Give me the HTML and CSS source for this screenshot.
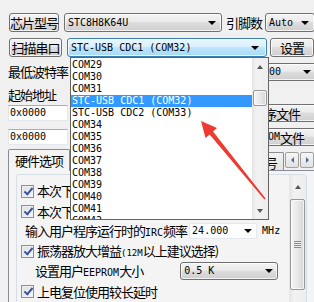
FILE: index.html
```html
<!DOCTYPE html>
<html lang="zh-CN">
<head>
    <meta charset="UTF-8">
    <title>STC-ISP</title>
    <link rel="stylesheet" href="styles.css">
</head>
<body>

<div class="window">
    <!-- Baris cip -->
    <div class="row row-chip">
        <button class="btn btn-side">芯片型号</button>
        <div class="combo combo-chip"><span class="combo-text">STC8H8K64U</span><span class="combo-arrow"></span></div>
        <span class="label label-pins">引脚数</span>
        <div class="combo combo-pins"><span class="combo-text">Auto</span><span class="combo-arrow"></span></div>
    </div>

    <div class="row row-port">
        <button class="btn btn-side">扫描串口</button>
        <div class="combo combo-port"><span class="combo-text">STC-USB CDC1 (COM32)</span><span class="combo-arrow"></span></div>
        <button class="btn btn-set">设置</button>
    </div>

    <div class="row row-baud">
        <span class="label">最低波特率</span>
        <div class="combo combo-baud"><span class="combo-text">115200</span><span class="combo-arrow"></span></div>
    </div>

    <div class="row row-addr-title">
        <span class="label">起始地址</span>
    </div>

    <div class="row row-addr">
        <div class="field">0x0000</div>
        <button class="btn btn-file">打开程序文件</button>
    </div>

    <div class="row row-addr">
        <div class="field">0x0000</div>
        <button class="btn btn-file btn-file-eeprom">打开<span class="en">EEPROM</span>文件</button>
    </div>

    <!-- Tab pilihan perkakasan -->
    <div class="tabs">
        <div class="tab-strip">
            <div class="tab is-active">硬件选项</div>
            <div class="tab-rest">
                <div class="tab">程序加密后传输</div>
                <div class="tab">ID号</div>
            </div>
            <div class="tab-scroll">
                <span class="tab-scroll-btn"><span class="tri tri-left"></span></span>
                <span class="tab-scroll-btn"><span class="tri tri-right"></span></span>
            </div>
        </div>

        <div class="tab-panel">
            <div class="options">
                <div class="options-list">
                    <div class="opt-row">
                        <span class="check"></span>
                        <span>本次下载时调节<span class="en">IRC</span>频率</span>
                    </div>
                    <div class="opt-row">
                        <span class="check"></span>
                        <span>本次下载后自动运行</span>
                    </div>
                    <div class="opt-row opt-plain">
                        <span>输入用户程序运行时的<span class="en">IRC</span>频率</span>
                        <div class="edit-combo"><span class="combo-text">24.000</span><span class="combo-arrow"></span></div>
                        <span class="en unit">MHz</span>
                    </div>
                    <div class="opt-row">
                        <span class="check"></span>
                        <span>振荡器放大增益<span class="small">(12M</span>以上建议选择)</span>
                    </div>
                    <div class="opt-row opt-indent">
                        <span>设置用户<span class="en">EEPROM</span>大小</span>
                        <div class="combo combo-eeprom"><span class="combo-text">0.5 K</span><span class="combo-arrow"></span></div>
                    </div>
                    <div class="opt-row">
                        <span class="check"></span>
                        <span>上电复位使用较长延时</span>
                    </div>
                </div>
                <div class="vscroll vscroll-options">
                    <span class="scroll-btn"><span class="tri tri-up"></span></span>
                    <span class="scroll-track">
                        <span class="scroll-thumb scroll-thumb-long"><span class="grip"></span></span>
                    </span>
                </div>
            </div>
        </div>
    </div>

    <!-- Senarai port yang terbuka -->
    <div class="dropdown">
        <ul class="dropdown-items">
            <li>COM29</li>
            <li>COM30</li>
            <li>COM31</li>
            <li class="is-selected">STC-USB CDC1 (COM32)</li>
            <li>STC-USB CDC2 (COM33)</li>
            <li>COM34</li>
            <li>COM35</li>
            <li>COM36</li>
            <li>COM37</li>
            <li>COM38</li>
            <li>COM39</li>
            <li>COM40</li>
            <li>COM41</li>
            <li>COM42</li>
        </ul>
        <div class="vscroll vscroll-list">
            <span class="scroll-btn"><span class="tri tri-up"></span></span>
            <span class="scroll-track">
                <span class="scroll-thumb scroll-thumb-short"></span>
            </span>
            <span class="scroll-btn"><span class="tri tri-down"></span></span>
        </div>
    </div>

    <svg class="pointer" width="314" height="302" viewBox="0 0 314 302">
        <polygon points="201,121 217,128 213,131.5 265.6,198.6 264.4,199.6 209.6,134.4 205.5,138" fill="#ee3a31"/>
    </svg>
</div>

</body>
</html>
```

FILE: styles.css
```css
* {
    box-sizing: border-box;
}

body {
    margin: 0;
    background-color: #f0f0f0;
    font-family: "Noto Sans CJK SC", sans-serif;
    font-size: 13px;
    letter-spacing: -1px;
    line-height: 1;
    color: #000;
}

.window {
    position: relative;
    width: 314px;
    height: 302px;
    overflow: hidden;
    padding-left: 8px;
}

.row {
    display: flex;
    align-items: center;
    white-space: nowrap;
}

.en {
    font-family: "DejaVu Sans Mono", monospace;
    font-size: 10px;
    letter-spacing: 0;
}

.small {
    font-family: "DejaVu Sans Mono", monospace;
    font-size: 9px;
    letter-spacing: 0;
}

/* butang gaya Windows 7 */
.btn {
    display: flex;
    align-items: center;
    justify-content: center;
    height: 19px;
    padding: 0;
    border: 1px solid #707070;
    border-radius: 3px;
    background: linear-gradient(#f3f3f3, #ebebeb 45%, #dddddd 50%, #cfcfcf);
    box-shadow: inset 0 0 0 1px rgba(255, 255, 255, 0.75);
    font: inherit;
    letter-spacing: inherit;
    color: #000;
    white-space: nowrap;
}

.btn-side {
    width: 56px;
    margin-left: 1px;
}

.btn-set {
    width: 44px;
    margin-left: 3px;
    flex-shrink: 0;
}

.btn-file {
    width: 104px;
    height: 18px;
    margin-left: 145px;
    justify-content: flex-end;
    padding-right: 16px;
    flex-shrink: 0;
}

.btn-file-eeprom {
    padding-right: 12px;
}

.combo {
    display: flex;
    align-items: center;
    height: 19px;
    padding: 0 5px 0 3px;
    border: 1px solid #707070;
    border-radius: 3px;
    background: linear-gradient(#f3f3f3, #ebebeb 45%, #dddddd 50%, #cfcfcf);
    box-shadow: inset 0 0 0 1px rgba(255, 255, 255, 0.75);
    flex-shrink: 0;
}

.combo-text {
    flex: 1;
    font-family: "DejaVu Sans Mono", monospace;
    font-size: 10px;
    letter-spacing: 0;
}

.combo-arrow {
    width: 0;
    height: 0;
    border-left: 4px solid transparent;
    border-right: 4px solid transparent;
    border-top: 4px solid #000;
}

.label {
    display: block;
}

.row-chip {
    margin-top: 13px;
}

.combo-chip {
    width: 158px;
    margin-left: 5px;
}

.label-pins {
    margin-left: 4px;
}

.combo-pins {
    width: 50px;
    margin-left: 3px;
}

.row-port {
    margin-top: 6px;
}

.combo-port {
    width: 200px;
    margin-left: 5px;
    border-color: #3c7fb1;
    background: linear-gradient(#eaf6fd, #d9f0fc 45%, #bee6fd 50%, #a7d9f5);
}

.combo-port .combo-arrow {
    margin-right: 2px;
}

.row-baud {
    margin-top: 5px;
    height: 19px;
}

.combo-baud {
    width: 76px;
    height: 18px;
    margin-left: 173px;
}

.row-addr-title {
    margin-top: 5px;
    height: 16px;
}

.row-addr {
    height: 18px;
    margin-top: 2px;
}

.row-addr + .row-addr {
    margin-top: 6px;
}

.field {
    width: 60px;
    height: 16px;
    padding: 2px 0 0 1px;
    border: 1px solid #abadb3;
    border-color: #abadb3 #e3e9ef #e3e9ef #e2e3ea;
    background-color: #fff;
    font-family: "DejaVu Sans Mono", monospace;
    font-size: 10px;
    letter-spacing: 0;
    flex-shrink: 0;
}

/* tab */
.tabs {
    margin-top: 3px;
}

.tab-strip {
    display: flex;
    align-items: flex-end;
    height: 21px;
    white-space: nowrap;
}

.tab {
    height: 18px;
    padding: 3px 6px 0;
    border: 1px solid #898c95;
    border-bottom: none;
    border-radius: 2px 2px 0 0;
    background: linear-gradient(#f2f2f2, #e3e3e3);
    flex-shrink: 0;
}

.tab.is-active {
    position: relative;
    height: 22px;
    margin-bottom: -1px;
    padding-top: 4px;
    background: #f4f4f4;
    z-index: 1;
}

.tab-rest {
    display: flex;
    justify-content: flex-end;
    align-items: flex-end;
    flex: 1;
    height: 21px;
}

.tab-scroll {
    display: flex;
    gap: 1px;
    margin: 0 0 2px 1px;
}

.tab-scroll-btn {
    display: flex;
    align-items: center;
    justify-content: center;
    width: 14px;
    height: 16px;
    border: 1px solid #a0a0a0;
    border-radius: 2px;
    background: linear-gradient(#f6f6f6, #e2e2e2);
}

.tri {
    width: 0;
    height: 0;
}

.tri-left {
    border-top: 3px solid transparent;
    border-bottom: 3px solid transparent;
    border-right: 3px solid #4a6a9a;
}

.tri-right {
    border-top: 3px solid transparent;
    border-bottom: 3px solid transparent;
    border-left: 3px solid #4a6a9a;
}

.tri-up {
    border-left: 3.5px solid transparent;
    border-right: 3.5px solid transparent;
    border-bottom: 4px solid #555;
}

.tri-down {
    border-left: 3.5px solid transparent;
    border-right: 3.5px solid transparent;
    border-top: 4px solid #555;
}

.tab-panel {
    height: 140px;
    margin-right: -12px;
    padding: 3px 0 0 7px;
    border: 1px solid #898c95;
    background-color: #f4f4f4;
}

.options {
    display: flex;
    width: 291px;
    height: 140px;
    border: 1px solid #d5dfe5;
    border-radius: 3px;
}

.options-list {
    flex: 1;
    padding: 6px 0 0 4px;
}

.opt-row {
    display: flex;
    align-items: center;
    height: 20px;
    white-space: nowrap;
}

.opt-plain {
    padding-left: 4px;
}

.opt-indent {
    padding-left: 14px;
}

.check {
    position: relative;
    width: 13px;
    height: 13px;
    margin-right: 3px;
    border: 1px solid #8e8f8f;
    background: linear-gradient(135deg, #dcdfe4, #f5f6f8);
    box-shadow: inset 0 0 0 1px #eef0f3;
    flex-shrink: 0;
}

.check::after {
    content: "";
    position: absolute;
    left: 3.5px;
    top: 0.5px;
    width: 3px;
    height: 7px;
    border-right: 2px solid #3d559a;
    border-bottom: 2px solid #3d559a;
    transform: rotate(40deg);
}

.edit-combo {
    display: flex;
    align-items: center;
    width: 68px;
    height: 16px;
    margin-left: 2px;
    padding: 0 4px 0 2px;
    border: 1px solid #e3e9ef;
    background-color: #fff;
}

.unit {
    margin-left: 5px;
}

.combo-eeprom {
    width: 98px;
    height: 18px;
    margin-left: 37px;
    padding-right: 4px;
}

/* bar skrol */
.vscroll {
    display: flex;
    flex-direction: column;
    width: 16px;
    background: linear-gradient(to right, #e4e4e4, #f2f2f2 30%, #ededed);
    flex-shrink: 0;
}

.vscroll-options {
    width: 17px;
}

.scroll-btn {
    display: flex;
    align-items: center;
    justify-content: center;
    height: 17px;
    flex-shrink: 0;
}

.scroll-track {
    flex: 1;
}

.scroll-thumb {
    display: flex;
    align-items: center;
    justify-content: center;
    margin: 0 1px;
    border: 1px solid #979797;
    border-radius: 2px;
    background: linear-gradient(to right, #f4f4f4, #e8e8e8 50%, #d6d6d6);
    box-shadow: inset 0 0 0 1px rgba(255, 255, 255, 0.7);
}

.scroll-thumb-short {
    height: 16px;
    margin-top: 15px;
}

.vscroll-options .scroll-btn {
    height: 23px;
}

.scroll-thumb-long {
    height: 91px;
    margin-top: 1px;
}

.grip {
    width: 7px;
    height: 7px;
    background: repeating-linear-gradient(#8a8a8a 0, #8a8a8a 1px, #f0f0f0 1px, #f0f0f0 2px);
}

/* senarai lungsur */
.dropdown {
    position: absolute;
    left: 70px;
    top: 57px;
    display: flex;
    width: 199px;
    height: 163px;
    border: 1px solid #646464;
    background-color: #fff;
    z-index: 2;
}

.dropdown-items {
    flex: 1;
    margin: 0;
    padding: 1px 0 0;
    list-style: none;
    overflow: hidden;
}

.dropdown-items li {
    height: 12px;
    padding-left: 1px;
    font-family: "DejaVu Sans Mono", monospace;
    font-size: 10px;
    line-height: 12px;
    letter-spacing: 0;
    white-space: nowrap;
}

.dropdown-items li.is-selected {
    background-color: #3399ff;
    color: #fff;
}

.pointer {
    position: absolute;
    left: 0;
    top: 0;
    z-index: 3;
    pointer-events: none;
}
```
